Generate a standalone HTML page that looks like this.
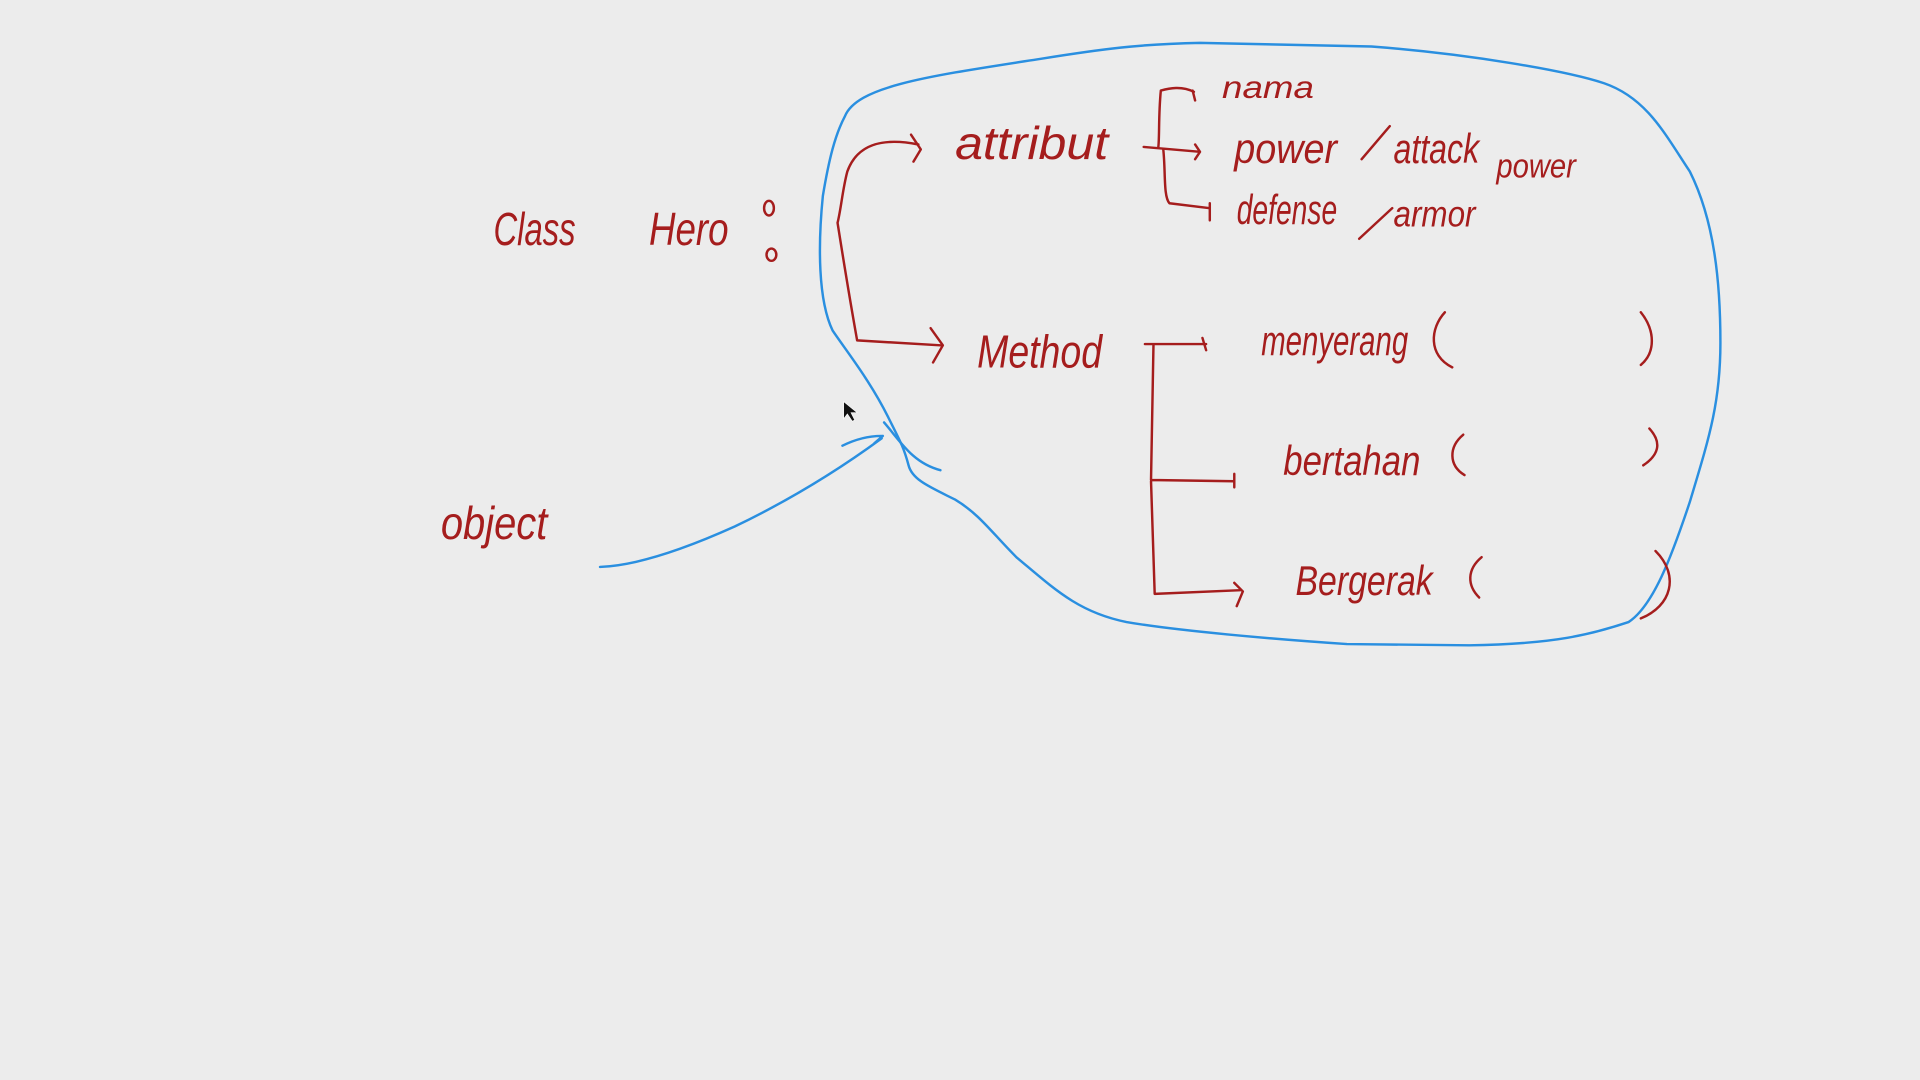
<!DOCTYPE html>
<html><head><meta charset="utf-8"><style>
html,body{margin:0;padding:0;background:#ececec;width:1920px;height:1080px;overflow:hidden}
svg{display:block}
text{font-family:"Liberation Sans",sans-serif;font-style:italic;fill:#a51d1d}
</style></head><body>
<svg width="1920" height="1080" viewBox="0 0 1568 882" xmlns="http://www.w3.org/2000/svg">
<rect width="1568" height="882" fill="#ececec"/>
<g fill="none" stroke="#2a8fe0" stroke-width="2" stroke-linecap="round">
<path d="M690,95 C700,70 760,62 850,48 C900,40 930,36 980,35 L1120,38 C1200,44 1280,58 1310,68 C1345,80 1360,110 1380,140 C1400,180 1405,230 1405,280 C1405,330 1395,360 1380,410 C1365,455 1350,495 1330,508 C1300,518 1270,526 1200,527 L1100,526 C1040,522 960,515 920,508 C880,500 860,480 830,455 C810,435 800,420 780,408 C760,398 745,392 742,380 C738,365 735,360 725,340 C710,310 690,285 680,270 C668,245 668,200 672,160 C677,130 682,110 690,95 Z"/>
<path d="M722,345 C735,360 745,378 768,384"/>
<path d="M490,463 C520,462 560,448 600,430 C650,406 690,380 720,358"/>
<path d="M688,364 C700,358 710,356 720,356 M714,362 L721,356"/>
</g>
<g fill="none" stroke="#a51d1d" stroke-width="2" stroke-linecap="round" stroke-linejoin="round">
<path d="M750,118 C720,112 700,118 692,140 C688,155 687,170 684,182 C690,220 695,250 700,278 L768,282"/>
<path d="M744,110 L752,122 L746,132"/>
<path d="M760,268 L770,282 L762,296"/>
<path d="M975,75 C965,70 955,72 948,74 C946,95 947,110 946,120 M934,120 L980,124 M976,118 L980,124 L976,130 M950,122 C952,140 950,160 955,166 L988,170 M988,166 L988,180"/>
<path d="M974,74 L976,82"/>
<path d="M935,281 L985,281 M982,276 L985,286 M942,282 L940,392 L1008,393 M1008,387 L1008,398 M940,393 L943,485 L1013,482 M1008,476 L1015,483 L1010,495"/>
<path d="M1180,255 C1168,268 1166,290 1186,300"/>
<path d="M1340,255 C1352,270 1352,288 1340,298"/>
<path d="M1195,355 C1183,365 1183,380 1196,388"/>
<path d="M1347,350 C1358,362 1354,372 1342,380"/>
<path d="M1210,455 C1198,465 1198,478 1208,488"/>
<path d="M1352,450 C1372,470 1365,495 1340,505"/>
<path d="M1112,130 L1135,103 M1110,195 L1137,170"/>
<ellipse cx="628" cy="170" rx="4" ry="6"/>
<ellipse cx="630" cy="208" rx="4" ry="5"/>
</g>
<text x="403" y="200" font-size="38" textLength="67" lengthAdjust="spacingAndGlyphs">Class</text>
<text x="530" y="200" font-size="38" textLength="65" lengthAdjust="spacingAndGlyphs">Hero</text>
<text x="780" y="130" font-size="38" textLength="125" lengthAdjust="spacingAndGlyphs">attribut</text>
<text x="998" y="80" font-size="26" textLength="75" lengthAdjust="spacingAndGlyphs">nama</text>
<text x="1008" y="133" font-size="34" textLength="84" lengthAdjust="spacingAndGlyphs">power</text>
<text x="1138" y="133" font-size="34" textLength="70" lengthAdjust="spacingAndGlyphs">attack</text>
<text x="1222" y="145" font-size="28" textLength="65" lengthAdjust="spacingAndGlyphs">power</text>
<text x="1010" y="183" font-size="34" textLength="82" lengthAdjust="spacingAndGlyphs">defense</text>
<text x="1138" y="185" font-size="30" textLength="67" lengthAdjust="spacingAndGlyphs">armor</text>
<text x="798" y="300" font-size="38" textLength="102" lengthAdjust="spacingAndGlyphs">Method</text>
<text x="1030" y="290" font-size="34" textLength="120" lengthAdjust="spacingAndGlyphs">menyerang</text>
<text x="1048" y="388" font-size="34" textLength="112" lengthAdjust="spacingAndGlyphs">bertahan</text>
<text x="1058" y="486" font-size="34" textLength="112" lengthAdjust="spacingAndGlyphs">Bergerak</text>
<text x="360" y="440" font-size="38" textLength="87" lengthAdjust="spacingAndGlyphs">object</text>
<path d="M689,328 L689,342 L692,338 L696,344 L698,343 L695,337 L700,337 Z" fill="#111" stroke="#fff" stroke-width="0.5"/>
</svg>
</body></html>
